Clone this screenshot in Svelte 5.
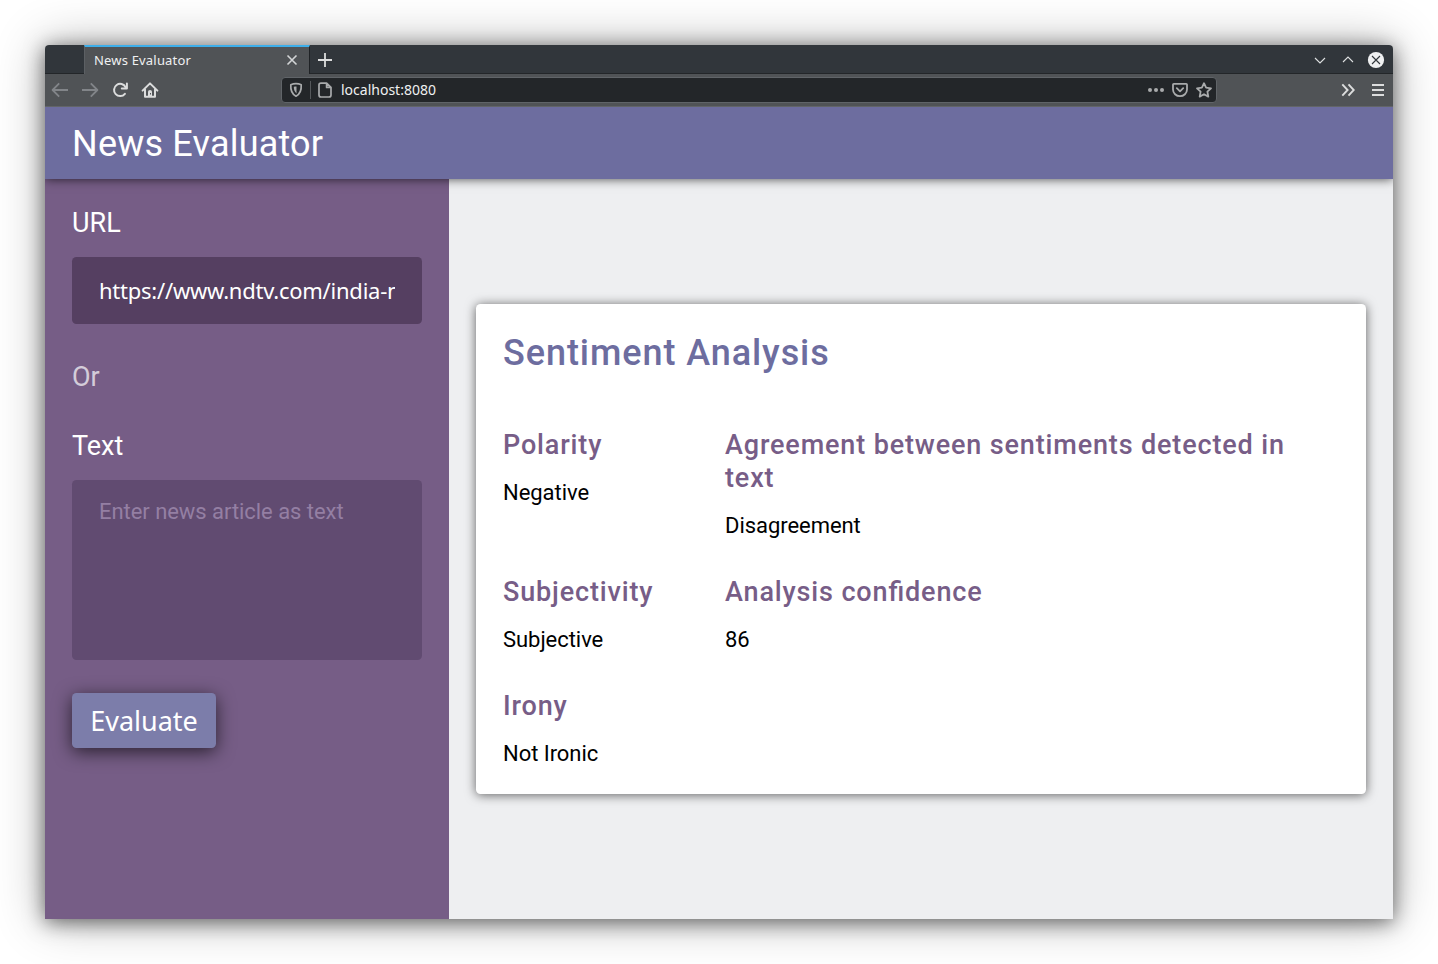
<script>
  let url = $state('https://www.ndtv.com/india-news/latest');
  let article = $state('');
  const results = [
    { title: 'Polarity', value: 'Negative' },
    { title: 'Agreement between sentiments detected in text', value: 'Disagreement' },
    { title: 'Subjectivity', value: 'Subjective' },
    { title: 'Analysis confidence', value: '86' },
    { title: 'Irony', value: 'Not Ironic' }
  ];
</script>

<div class="desktop">
  <div class="window">
    <div class="tabbar">
      <div class="tab">
        <span>News Evaluator</span>
        <svg width="12" height="12" viewBox="0 0 12 12"><path d="M1.5 1.5l9 9M10.5 1.5l-9 9" stroke="#d3d5d6" stroke-width="1.6" fill="none" /></svg>
      </div>
      <svg class="plus" width="16" height="16" viewBox="0 0 16 16"><path d="M8 1v14M1 8h14" stroke="#dcdddd" stroke-width="1.8" fill="none" /></svg>
      <div class="controls">
        <svg width="16" height="16" viewBox="0 0 16 16"><path d="M3 6l5 5 5-5" stroke="#dfe1e2" stroke-width="1.1" fill="none" /></svg>
        <svg width="16" height="16" viewBox="0 0 16 16"><path d="M3 10l5-5 5 5" stroke="#dfe1e2" stroke-width="1.1" fill="none" /></svg>
        <svg width="18" height="18" viewBox="0 0 18 18"><circle cx="9" cy="9" r="8.1" fill="#eff0f1" /><path d="M5 5l8 8M13 5l-8 8" stroke="#31363b" stroke-width="1.1" fill="none" /></svg>
      </div>
    </div>

    <div class="toolbar">
      <div class="nav">
        <svg width="18" height="16" viewBox="0 0 18 16"><path d="M17 8H2M8.2 1.3L1.6 8l6.6 6.7" stroke="#828589" stroke-width="1.8" fill="none" stroke-linejoin="round" /></svg>
        <svg width="18" height="16" viewBox="0 0 18 16"><path d="M1 8h15M9.8 1.3L16.4 8l-6.6 6.7" stroke="#828589" stroke-width="1.8" fill="none" stroke-linejoin="round" /></svg>
        <svg width="18" height="16" viewBox="0 0 18 16"><path d="M14.6 5.2A6.100 6.100 0 1 0 13.900 11.800" stroke="#dcdddd" stroke-width="2" fill="none" stroke-linecap="round" /><path d="M15.900 1.500V6.500H10.800" stroke="#dcdddd" stroke-width="2" fill="none" stroke-linecap="round" stroke-linejoin="round" /></svg>
        <svg width="18" height="16" viewBox="0 0 18 16"><path d="M1.6 8.600L9 1.400l7.400 7.200M4 7.400V14.800h10V7.400" stroke="#dcdddd" stroke-width="2" fill="none" stroke-linecap="round" stroke-linejoin="round" /><path d="M7 15V9.600Q7 8 9 8t2 1.600V15z" fill="#dcdddd" /><path d="M9.500 11v1.500" stroke="#505356" stroke-width="1" /></svg>
      </div>
      <div class="address">
        <svg class="shield" width="14" height="16" viewBox="0 0 14 16"><path d="M7 1.700c2 0 3.800.4 5.200 1C12.600 8.300 10.700 12.200 7 14.200 3.300 12.200 1.400 8.300 1.800 2.700 3.200 2.100 5 1.700 7 1.700z" stroke="#a9abac" stroke-width="1.700" fill="none" stroke-linejoin="round" /><path d="M7.500 4.400v7C5.500 9.800 4.800 7.600 4.800 4.800 5.700 4.500 6.500 4.400 7.500 4.400z" fill="#a9abac" /></svg>
        <i class="divider"></i>
        <svg width="14" height="16" viewBox="0 0 14 16"><path d="M3 1.100h5.600L13 5.400V13q0 2-2 2H3Q1 15 1 13V3Q1 1.100 3 1.100zM8.600 1.500V5.400H12.800" stroke="#a9abac" stroke-width="1.700" fill="none" stroke-linejoin="round" /></svg>
        <span class="host">localhost:8080</span>
        <svg width="16" height="16" viewBox="0 0 16 16"><g fill="#a9abac"><circle cx="2" cy="8" r="2" /><circle cx="8" cy="8" r="2" /><circle cx="14" cy="8" r="2" /></g></svg>
        <svg class="pocket" width="16" height="16" viewBox="0 0 16 16"><path d="M1.800 1.800h12.400q.8 0 .8.800V7.500a7 6.700 0 0 1-14 0V2.600q0-.8.8-.8z" stroke="#a9abac" stroke-width="1.800" fill="none" /><path d="M4.800 6.200L8 9.400l3.200-3.200" stroke="#a9abac" stroke-width="1.800" fill="none" stroke-linecap="round" stroke-linejoin="round" /></svg>
        <svg width="16" height="16" viewBox="0 0 16 16"><path d="M8 1.200l2.100 4.500 4.900.6-3.600 3.400.9 4.900L8 12.200l-4.300 2.400.9-4.900L1 6.300l4.900-.6z" stroke="#a9abac" stroke-width="1.800" fill="none" stroke-linejoin="round" /></svg>
      </div>
      <div class="menus">
        <svg width="14" height="14" viewBox="0 0 14 14"><path d="M1.300 1.400L6.600 7l-5.300 5.600M7.500 1.400L12.800 7l-5.300 5.600" stroke="#dcdddd" stroke-width="1.900" fill="none" /></svg>
        <svg width="12" height="12" viewBox="0 0 12 12"><path d="M0 1h12M0 6h12M0 11h12" stroke="#dcdddd" stroke-width="2" /></svg>
      </div>
    </div>

    <header><h1>News Evaluator</h1></header>

    <div class="page">
      <aside>
        <label for="url">URL</label>
        <input id="url" type="text" bind:value={url} />
        <div class="or">Or</div>
        <label for="article">Text</label>
        <textarea id="article" placeholder="Enter news article as text" bind:value={article}></textarea>
        <button>Evaluate</button>
      </aside>
      <main>
        <section class="card">
          <h2>Sentiment Analysis</h2>
          <div class="results">
            {#each results as r}
              <div>
                <h3>{r.title}</h3>
                <p>{r.value}</p>
              </div>
            {/each}
          </div>
        </section>
      </main>
    </div>
  </div>
</div>

<style>
  :global(body) { margin: 0; background: #fff; }
  .desktop { box-sizing: border-box; width: 1438px; height: 964px; padding: 45px; overflow: hidden; font-family: Roboto, sans-serif; }
  .window { width: 1348px; height: 874px; display: flex; flex-direction: column; border-radius: 4px 4px 0 0; box-shadow: 0 0 50px rgba(0, 0, 0, .3), 0 3px 20px rgba(0, 0, 0, .55); }
  svg { display: block; flex: none; }
  .tabbar { height: 29px; display: flex; align-items: center; background: #31363b; border-radius: 4px 4px 0 0; box-shadow: inset 0 -1px #232629; font-family: "Noto Sans", sans-serif; }
  .tab { box-sizing: border-box; width: 226px; height: 29px; margin-left: 39px; padding: 0 11px 2px 9px; display: flex; align-items: center; justify-content: space-between; border-top: 2px solid #3daee9; border-left: 1px solid #5c6064; border-right: 1px solid #1f2225; background: #505356; color: #eff0f1; font-size: 13px; letter-spacing: .18px; }
  .tab svg { margin-top: 1px; }
  .plus { margin-left: 7px; }
  .controls { margin-left: auto; padding-right: 8px; display: flex; align-items: center; gap: 12px; }
  .controls svg:last-child { margin-left: -1px; }
  .toolbar { box-sizing: border-box; height: 33px; display: flex; align-items: center; background: #505356; border-bottom: 1px solid #626568; font-family: "Noto Sans", sans-serif; }
  .nav { display: flex; gap: 12px; padding-left: 6px; width: 230px; }
  .address { box-sizing: border-box; width: 936px; height: 26px; display: flex; align-items: center; border: 1px solid #606468; border-radius: 4px; background: #232629; padding: 0 4px 0 7px; }
  .divider { width: 1px; height: 18px; background: #55585b; margin: 0 7px; }
  .host { margin: 0 auto 0 9px; font-size: 14px; line-height: 18px; color: #eff0f1; }
  .pocket { margin: 0 8px; }
  .menus { margin-left: auto; padding-right: 9px; display: flex; align-items: center; gap: 17px; }
  header { box-sizing: border-box; height: 72px; flex: none; display: flex; align-items: center; padding: 2px 0 0 27px; background: #6d6d9f; position: relative; box-shadow: 0 0 10px rgba(0, 0, 0, .7); clip-path: inset(0 0 -20px 0); }
  h1, h2, h3, p { margin: 0; }
  h1 { font-size: 36px; line-height: 44px; font-weight: 400; letter-spacing: .2px; color: #fff; }
  .page { flex: 1; display: flex; min-height: 0; }
  aside { box-sizing: border-box; width: 404px; padding: 27px; display: flex; flex-direction: column; align-items: flex-start; background: #765d86; color: #fff; }
  label, .or { box-sizing: border-box; height: 33px; font-size: 27px; line-height: 35px; }
  .or { margin: 36px 0; color: rgba(255, 255, 255, .7); }
  input, textarea { box-sizing: border-box; width: 350px; margin: 18px 0 0; border: 0; border-radius: 4.500px; padding: 0 27px; font-size: 22px; color: #fff; outline: 0; resize: none; }
  input { height: 67px; padding-bottom: 2px; background: #553f61; font-family: "Noto Sans", sans-serif; letter-spacing: -.24px; }
  textarea { height: 180px; padding-top: 18px; background: #614b71; font-family: Roboto, sans-serif; line-height: 27px; letter-spacing: -.05px; }
  textarea::placeholder { color: #947fa3; }
  button { width: 144px; height: 55px; margin-top: 33px; padding: 0; border: 0; border-radius: 4.500px; background: #7c7daa; color: #fff; font: 27px "Noto Sans", sans-serif; box-shadow: 0 4px 18px rgba(0, 0, 0, .65); }
  main { flex: 1; display: flex; align-items: center; justify-content: center; background: #eeeff1; }
  .card { box-sizing: border-box; width: 890px; height: 490px; padding: 27px; border-radius: 4.500px; background: #fff; box-shadow: 0 1px 11px rgba(0, 0, 0, .6); }
  h2 { font-size: 36px; line-height: 44px; font-weight: 500; letter-spacing: .93px; color: #6d6d9f; }
  .results { margin-top: 54px; display: grid; grid-template-columns: 149px 614px; column-gap: 73px; row-gap: 36px; }
  h3 { font-size: 27px; line-height: 33px; font-weight: 500; letter-spacing: .85px; font-feature-settings: "liga" 1; color: #775d87; }
  p { margin-top: 17px; margin-bottom: 1px; font-size: 22px; line-height: 27px; color: #000; letter-spacing: -.05px; }
</style>
